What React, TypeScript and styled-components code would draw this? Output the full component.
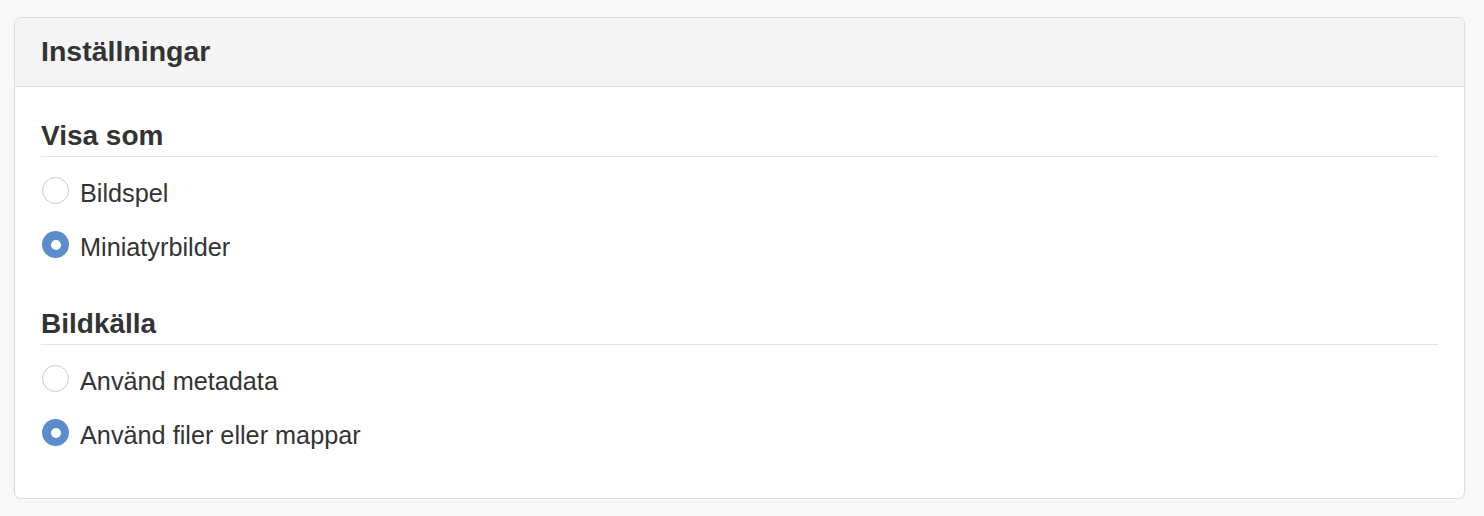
import { FC, useState } from "react";
import styled, { createGlobalStyle } from "styled-components";

const GlobalStyle = createGlobalStyle`
  html, body {
    margin: 0;
    padding: 0;
    background-color: #f8f8f8;
  }
  body {
    font-family: "Liberation Sans", Arial, Helvetica, sans-serif;
    color: #333;
  }
`

const Page = styled.div`
  padding: 17px 19px 0 14px;
`

const Panel = styled.section`
  background-color: #fff;
  border: 1px solid #ddd;
  border-radius: 7px;
  box-shadow: 0 1px 2px rgba(0, 0, 0, 0.05);
  overflow: hidden;
`

const PanelHeading = styled.div`
  background-color: #f5f5f5;
  border-bottom: 1px solid #ddd;
  padding: 17px 26px 18px;
  > h3 {
    margin: 0;
    font-size: 28.5px;
    line-height: 33px;
    font-weight: bold;
    color: #333;
  }
`

const PanelBody = styled.div`
  display: flex;
  flex-direction: column;
  gap: 46px;
  padding: 33px 26px 48px;
`

const Group = styled.fieldset`
  margin: 0;
  padding: 0;
  border: 0;
  min-width: 0;
`

const GroupTitle = styled.legend`
  display: block;
  width: 100%;
  margin: 0 0 16px;
  padding: 0 0 4px;
  font-size: 28px;
  line-height: 32px;
  font-weight: bold;
  color: #333;
  border-bottom: 1px solid #e5e5e5;
`

const Options = styled.div`
  display: flex;
  flex-direction: column;
  gap: 19px;
`

const OptionRow = styled.label`
  display: flex;
  align-items: center;
  gap: 11px;
  height: 35px;
  font-size: 25.25px;
  color: #333;
  cursor: pointer;
`

const OptionText = styled.span`
  margin-top: 6px;
`

const RadioDot = styled.span<{ $checked: boolean }>`
  flex: none;
  box-sizing: border-box;
  width: 27px;
  height: 27px;
  margin-left: 1px;
  border-radius: 50%;
  display: flex;
  align-items: center;
  justify-content: center;
  background-color: ${p => (p.$checked ? "#5b8ccb" : "#fff")};
  border: ${p => (p.$checked ? "none" : "1px solid #cbcbcb")};
  &::after {
    content: "";
    display: ${p => (p.$checked ? "block" : "none")};
    width: 10px;
    height: 10px;
    border-radius: 50%;
    background-color: #fff;
  }
`

const HiddenInput = styled.input`
  position: absolute;
  opacity: 0;
  width: 0;
  height: 0;
  margin: 0;
`

type Option = { value: string; label: string }

const VIEW_OPTIONS: Option[] = [
  { value: "slideshow", label: "Bildspel" },
  { value: "thumbnails", label: "Miniatyrbilder" },
]

const SOURCE_OPTIONS: Option[] = [
  { value: "metadata", label: "Använd metadata" },
  { value: "files", label: "Använd filer eller mappar" },
]

const RadioGroup: FC<{
  name: string
  title: string
  options: Option[]
  value: string
  onChange: (v: string) => void
}> = ({ name, title, options, value, onChange }) => (
  <Group>
    <GroupTitle>{title}</GroupTitle>
    <Options>
      {options.map(o => (
        <OptionRow key={o.value}>
          <HiddenInput
            type="radio"
            name={name}
            value={o.value}
            checked={value === o.value}
            onChange={() => onChange(o.value)}
          />
          <RadioDot $checked={value === o.value} />
          <OptionText>{o.label}</OptionText>
        </OptionRow>
      ))}
    </Options>
  </Group>
)

const App: FC = () => {
  const [view, setView] = useState<string>("thumbnails")
  const [source, setSource] = useState<string>("files")

  return (
    <>
      <GlobalStyle />
      <Page>
        <Panel>
          <PanelHeading>
            <h3>Inställningar</h3>
          </PanelHeading>
          <PanelBody>
            <RadioGroup
              name="view"
              title="Visa som"
              options={VIEW_OPTIONS}
              value={view}
              onChange={setView}
            />
            <RadioGroup
              name="source"
              title="Bildkälla"
              options={SOURCE_OPTIONS}
              value={source}
              onChange={setSource}
            />
          </PanelBody>
        </Panel>
      </Page>
    </>
  )
}

export default App
